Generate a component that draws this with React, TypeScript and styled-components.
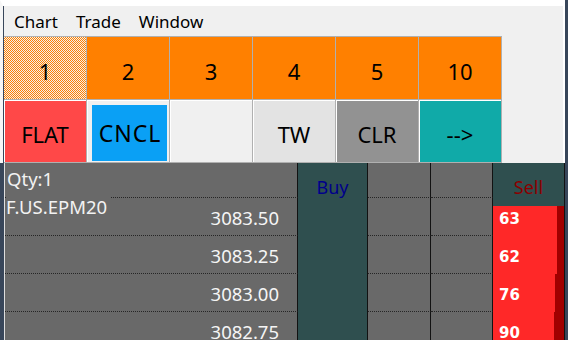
import React from 'react';
import styled, { createGlobalStyle } from 'styled-components';

const GlobalStyle = createGlobalStyle`
  html, body { margin: 0; padding: 0; background: #ffffff; overflow: hidden; }
  body { font-family: "Noto Sans", "Open Sans", "DejaVu Sans", sans-serif; }
  #root { width: 568px; height: 340px; }
`;

const FONT = `"Noto Sans", "Open Sans", "DejaVu Sans", sans-serif`;

const Frame = styled.div`
  width: 568px;
  height: 340px;
  box-sizing: border-box;
  border-right: 3px solid #38465a;
  display: flex;
  flex-direction: column;
  overflow: hidden;
  background: #ffffff;
  font-family: ${FONT};
`;

const TopArea = styled.div`
  border-top: 6px solid #ffffff;
  border-left: 3px solid #f6f6f6;
  border-right: 2px solid #ffffff;
  padding-left: 1px;
  box-shadow: inset 1px 0 0 #38465a;
  background: #f0f0f0;
`;

const MenuBar = styled.div`
  height: 30px;
  display: flex;
  align-items: center;
  padding-left: 1px;
`;

const MenuItem = styled.span`
  padding: 0 9px;
  font-size: 17px;
  color: #000000;
`;

const ButtonPanel = styled.div`
  display: flex;
`;

const ButtonGrid = styled.div`
  display: grid;
  grid-template-columns: repeat(6, 82px);
  grid-template-rows: repeat(2, 62px);
  gap: 1px;
  background: #b0b0b0;
  border: 1px solid #b0b0b0;
  border-left: none;
`;

const Key = styled.div<{ $bg: string; $checker?: boolean; $raised?: boolean; $focus?: boolean }>`
  box-sizing: border-box;
  display: flex;
  align-items: center;
  justify-content: center;
  padding: ${({ $focus }) => ($focus ? '5px 2px 1px 5px' : '5px 0 0 0')};
  background-color: ${({ $bg }) => $bg};
  background-image: ${({ $checker }) =>
    $checker ? 'repeating-conic-gradient(#ff8000 0 25%, #f4f0ec 0 50%)' : 'none'};
  background-size: 2px 2px;
  box-shadow: ${({ $raised }) => ($raised ? 'inset 1px 1px 0 #ffffff' : 'none')};
  font-size: 22px;
  color: #000000;
  user-select: none;
`;

const FocusFill = styled.div`
  flex: 1;
  align-self: stretch;
  display: flex;
  align-items: center;
  justify-content: center;
  padding-left: 1px;
  background: #0aa0f5;
  font-size: 23px;
  letter-spacing: 1px;
`;

const Ladder = styled.div`
  position: relative;
  flex: 1;
  display: grid;
  grid-template-columns: 293px 70px 63px 62px 72px;
  grid-template-rows: 35px;
  grid-auto-rows: 38px;
  align-content: start;
  background: #696969;
  border-left: 4px solid #38465a;
  padding-left: 1px;
  box-shadow: inset 1px 0 0 #dedede;
  overflow: hidden;
`;

type Kind = 'price' | 'buy' | 'blank' | 'sell';

const Cell = styled.div<{ $kind: Kind }>`
  box-sizing: border-box;
  min-width: 0;
  border-right: 1px solid #121212;
  border-bottom: ${({ $kind }) =>
    $kind === 'buy' || $kind === 'sell' ? 'none' : '1px dotted #262626'};
  background: ${({ $kind }) => ($kind === 'buy' || $kind === 'sell' ? '#2f4f4f' : 'transparent')};
`;

const QtyLabel = styled(Cell)`
  padding: 3px 0 0 2px;
  font-size: 18.5px;
  color: #f2f2f2;
`;

const SideHeader = styled(Cell)<{ $color: string }>`
  padding-top: 12px;
  text-align: center;
  font-size: 18px;
  color: ${({ $color }) => $color};
`;

const PriceCell = styled(Cell)`
  display: flex;
  align-items: center;
  justify-content: flex-end;
  padding: 1px 18px 0 0;
  font-size: 18.5px;
  color: #f5f5f5;
`;

const SellCell = styled(Cell)<{ $offset: number }>`
  display: flex;
  background: ${({ $offset }) => `linear-gradient(#2f4f4f 0 ${$offset}px, #ff2828 ${$offset}px)`};
`;

const SellQty = styled.div`
  flex: 1;
  display: flex;
  align-items: center;
  padding: 4px 0 0 6px;
  font-family: "DejaVu Sans", "Noto Sans", sans-serif;
  font-size: 15px;
  font-weight: 700;
  color: #ffffff;
`;

const VolumeBar = styled.div<{ $offset: number }>`
  align-self: stretch;
  background: ${({ $offset }) => `linear-gradient(transparent 0 ${$offset}px, #a00000 ${$offset}px)`};
`;

const Symbol = styled.div`
  position: absolute;
  left: 2px;
  top: 31px;
  padding-right: 3px;
  background: #696969;
  font-size: 18.5px;
  color: #f2f2f2;
`;

const topKeys = ['1', '2', '3', '4', '5', '10'];

const bottomKeys: { label: string; bg: string; focus?: boolean }[] = [
  { label: 'FLAT', bg: '#ff4848' },
  { label: 'CNCL', bg: '#f0f0f0', focus: true },
  { label: '', bg: '#f0f0f0' },
  { label: 'TW', bg: '#e3e3e3' },
  { label: 'CLR', bg: '#929292' },
  { label: '-->', bg: '#10aaa8' },
];

const rows = [
  { price: '3083.50', sell: 63, bar: 7 },
  { price: '3083.25', sell: 62, bar: 7 },
  { price: '3083.00', sell: 76, bar: 9 },
  { price: '3082.75', sell: 90, bar: 10 },
];

export default function App() {
  return (
    <>
      <GlobalStyle />
      <Frame>
        <TopArea>
          <MenuBar>
            <MenuItem>Chart</MenuItem>
            <MenuItem>Trade</MenuItem>
            <MenuItem>Window</MenuItem>
          </MenuBar>
          <ButtonPanel>
            <ButtonGrid>
              {topKeys.map((k, i) => (
                <Key key={k} $bg="#ff8000" $checker={i === 0}>
                  {k}
                </Key>
              ))}
              {bottomKeys.map((k, i) =>
                k.focus ? (
                  <Key key={i} $bg={k.bg} $focus $raised>
                    <FocusFill>{k.label}</FocusFill>
                  </Key>
                ) : (
                  <Key key={i} $bg={k.bg} $raised>
                    {k.label}
                  </Key>
                )
              )}
            </ButtonGrid>
          </ButtonPanel>
        </TopArea>
        <Ladder>
          <QtyLabel $kind="price">Qty:1</QtyLabel>
          <SideHeader $kind="buy" $color="#00008b">Buy</SideHeader>
          <Cell $kind="blank" />
          <Cell $kind="blank" />
          <SideHeader $kind="sell" $color="#8b0000">Sell</SideHeader>
          {rows.map((r, i) => (
            <React.Fragment key={r.price}>
              <PriceCell $kind="price">{r.price}</PriceCell>
              <Cell $kind="buy" />
              <Cell $kind="blank" />
              <Cell $kind="blank" />
              <SellCell $kind="sell" $offset={i === 0 ? 8 : 0}>
                <SellQty>{r.sell}</SellQty>
                <VolumeBar $offset={i === 0 ? 8 : 0} style={{ width: r.bar }} />
              </SellCell>
            </React.Fragment>
          ))}
          <Symbol>F.US.EPM20</Symbol>
        </Ladder>
      </Frame>
    </>
  );
}
